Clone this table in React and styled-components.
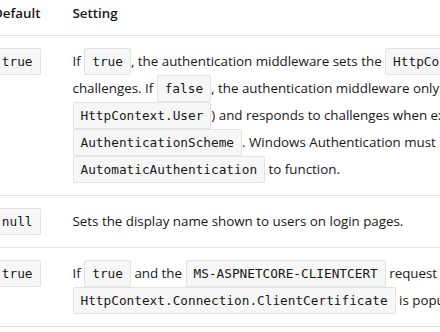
import React from 'react';
import styled, { createGlobalStyle } from 'styled-components';

const Global = createGlobalStyle`
  body {
    margin: 0;
    background: #fff;
    color: #171717;
    font-family: "Open Sans", "Noto Sans", sans-serif;
    font-size: 13.35px;
  }
`;

const Viewport = styled.div`
  width: 440px;
  height: 332px;
  overflow: hidden;
`;

const Table = styled.table`
  border-collapse: collapse;
  margin-left: -23px;
  line-height: 27px;
`;

const Head = styled.th`
  text-align: ${p => (p.$right ? 'right' : 'left')};
  font-weight: 600;
  padding: 0 16px 8px;
  border-bottom: 1px solid #e3e3e3;
  white-space: nowrap;
`;

const Cell = styled.td`
  text-align: ${p => (p.$right ? 'right' : 'left')};
  vertical-align: top;
  padding: 12px 16px;
  white-space: nowrap;
`;

const Row = styled.tr`
  border-bottom: 1px solid #e3e3e3;
`;

const Code = styled.code`
  font-family: "DejaVu Sans Mono", monospace;
  font-size: 12.75px;
  padding: 5px 7px;
  background: #f7f7f7;
  border: 1px solid #e3e3e3;
  border-radius: 2px;
  color: #171717;
`;

export default function App() {
  return (
    <Viewport>
      <Global />
      <Table>
        <thead>
          <tr>
            <Head $right>Default</Head>
            <Head>Setting</Head>
          </tr>
        </thead>
        <tbody>
          <Row>
            <Cell $right><Code>true</Code></Cell>
            <Cell>
              If <Code>true</Code>, the authentication middleware sets the <Code>HttpContext.User</Code> and responds to generic<br />
              challenges. If <Code>false</Code>, the authentication middleware only provides an identity (<br />
              <Code>HttpContext.User</Code>) and responds to challenges when explicitly requested by the<br />
              <Code>AuthenticationScheme</Code>. Windows Authentication must be enabled in IIS for<br />
              <Code>AutomaticAuthentication</Code> to function.
            </Cell>
          </Row>
          <Row>
            <Cell $right><Code>null</Code></Cell>
            <Cell>Sets the display name shown to users on login pages.</Cell>
          </Row>
          <Row>
            <Cell $right><Code>true</Code></Cell>
            <Cell>
              If <Code>true</Code> and the <Code>MS-ASPNETCORE-CLIENTCERT</Code> request header is present, the<br />
              <Code>HttpContext.Connection.ClientCertificate</Code> is populated.
            </Cell>
          </Row>
        </tbody>
      </Table>
    </Viewport>
  );
}
